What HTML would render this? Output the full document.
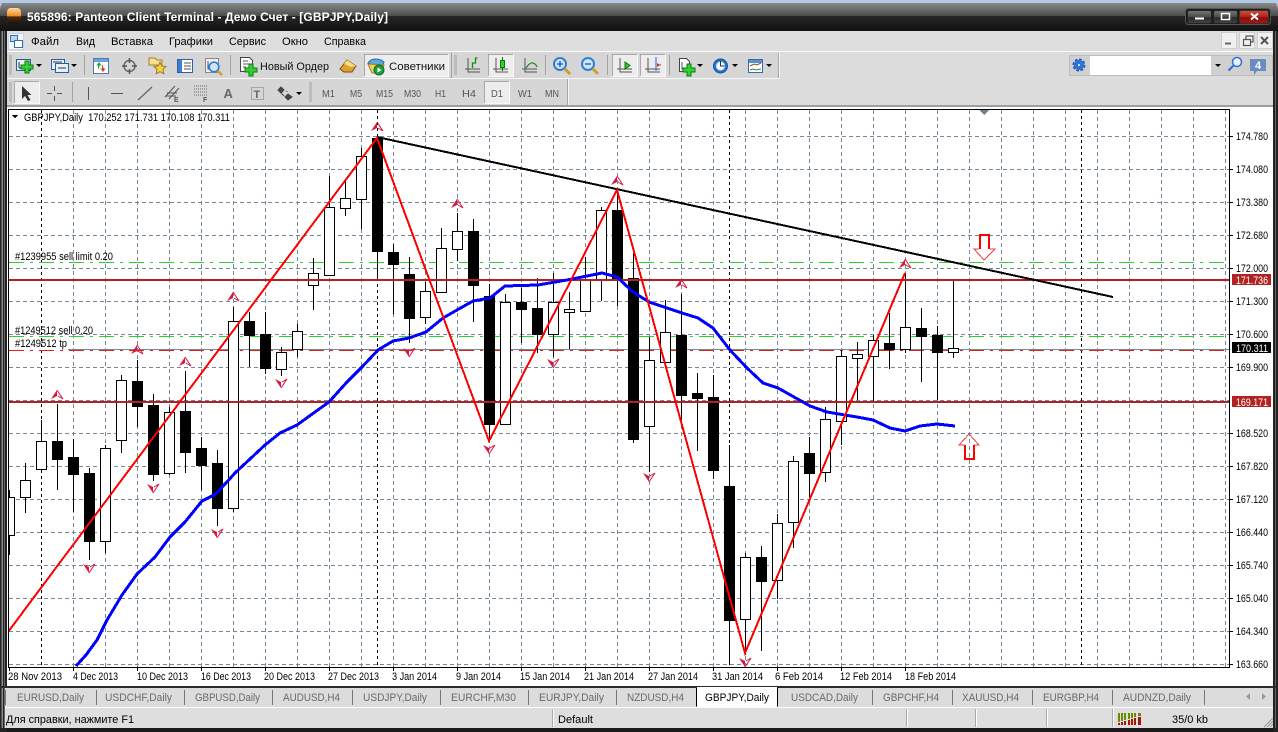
<!DOCTYPE html>
<html><head><meta charset="utf-8"><title>Panteon Client Terminal</title>
<style>
html,body{margin:0;padding:0;background:#000;width:1278px;height:732px;overflow:hidden}
svg{display:block}
text{font-family:"Liberation Sans","Noto Sans CJK SC",sans-serif;font-size:11px;fill:#000;white-space:pre}
.tf text{fill:#555;font-size:10.5px}
.tab text{fill:#6a6a6a}
</style></head><body>
<svg xmlns="http://www.w3.org/2000/svg" width="1278" height="732" viewBox="0 0 1278 732">
<defs>
<linearGradient id="t1" x1="0" y1="0" x2="0" y2="1"><stop offset="0" stop-color="#8a8a8a"/><stop offset="1" stop-color="#4c4c4c"/></linearGradient>
<linearGradient id="t2" x1="0" y1="0" x2="0" y2="1"><stop offset="0" stop-color="#262626"/><stop offset="1" stop-color="#121212"/></linearGradient>
<linearGradient id="logo" x1="0" y1="0" x2="0" y2="1"><stop offset="0" stop-color="#ffd9a0"/><stop offset=".5" stop-color="#f08a20"/><stop offset=".55" stop-color="#4a2a10"/><stop offset="1" stop-color="#201008"/></linearGradient>
<linearGradient id="wb" x1="0" y1="0" x2="0" y2="1"><stop offset="0" stop-color="#777"/><stop offset=".5" stop-color="#4a4a4a"/><stop offset=".55" stop-color="#2a2a2a"/><stop offset="1" stop-color="#444"/></linearGradient>
<linearGradient id="wr" x1="0" y1="0" x2="0" y2="1"><stop offset="0" stop-color="#d05040"/><stop offset=".5" stop-color="#b02018"/><stop offset=".55" stop-color="#8a0c08"/><stop offset="1" stop-color="#a81810"/></linearGradient>
<radialGradient id="clk"><stop offset="0" stop-color="#fff"/><stop offset=".55" stop-color="#e8f2ff"/><stop offset=".6" stop-color="#3a8ae0"/><stop offset="1" stop-color="#0b4aa0"/></radialGradient>
<clipPath id="ch"><rect x="9" y="110" width="1220" height="557"/></clipPath>
<path id="plus" d="M-2-6h4v4h4v4h-4v4h-4v-4h-4v-4h4z" fill="#35d035" stroke="#0b7a0b" stroke-width="1"/>
<g id="up"><path d="M-6 4L0-5 0 1z" fill="#dc143c"/><path d="M0-5L6 4 1 1" fill="none" stroke="#dc143c"/></g>
<g id="lens"><circle cx="0" cy="0" r="6" fill="#cfe4fa" stroke="#2f7fd0" stroke-width="2"/><path d="M4.5 4.5L10 10" stroke="#c8a030" stroke-width="3"/></g>
<polygon id="dd" points="0,0 6,0 3,3" fill="#000"/>
</defs>

<!-- window -->
<rect width="1278" height="732" fill="#1a1a1a"/>
<rect width="1278" height="3" fill="#b3cbe9"/>
<rect x="0" y="3" width="1278" height="13" fill="url(#t1)"/>
<rect x="0" y="16" width="1278" height="15" fill="url(#t2)"/>
<path d="M0 0H6Q1 2 0 9zM1278 0H1272Q1277 2 1278 9z" fill="#b3cbe9"/>
<rect x="7" y="8" width="14" height="16" rx="4" fill="url(#logo)"/>
<text x="27" y="21" style="fill:#fff;font-weight:bold;font-size:12px" textLength="361" lengthAdjust="spacing">565896: Panteon Client Terminal - Демо Счет - [GBPJPY,Daily]</text>
<rect x="1185.500" y="8.500" width="85" height="16" rx="3" fill="#1c1c1c" stroke="#555"/>
<rect x="1187.500" y="10.500" width="24" height="13" rx="2" fill="url(#wb)" stroke="#222"/>
<rect x="1213.500" y="10.500" width="24" height="13" rx="2" fill="url(#wb)" stroke="#222"/>
<rect x="1239.500" y="10.500" width="29" height="13" rx="2" fill="url(#wr)" stroke="#333"/>
<path d="M1195 18.500h9" stroke="#fff" stroke-width="2"/><rect x="1221.500" y="13.500" width="8" height="6" fill="none" stroke="#fff" stroke-width="1.500"/>
<path d="M1251 13.500l7 6m0-6l-7 6" stroke="#fff" stroke-width="2"/>

<!-- frame edges -->
<rect x="0" y="31" width="7" height="701" fill="#222"/>
<rect x="1" y="31" width="1" height="697" fill="#555"/><rect x="2" y="31" width="1" height="697" fill="#8a8a8a"/><rect x="4" y="31" width="1" height="697" fill="#6a6a6a"/>
<rect x="7" y="31" width="1" height="676" fill="#f2f2f2"/>
<rect x="1273" y="31" width="5" height="701" fill="#222"/><rect x="1275" y="31" width="1" height="697" fill="#666"/>

<!-- menu -->
<rect x="7" y="31" width="1266" height="20" fill="#dedede"/>
<rect x="7" y="51" width="1266" height="1" fill="#fafafa"/>
<rect x="8.500" y="33.500" width="15" height="16" fill="#f4f8fe" stroke="#c4d2e8"/>
<rect x="10.500" y="35.500" width="7" height="6" fill="#bcd6f4" stroke="#3a6ab0"/><rect x="14.500" y="40.500" width="8" height="7" fill="#fff" stroke="#3a6ab0"/>
<g>
<text x="31" y="45" textLength="28" lengthAdjust="spacingAndGlyphs">Файл</text><text x="76" y="45" textLength="19" lengthAdjust="spacingAndGlyphs">Вид</text><text x="111" y="45" textLength="42" lengthAdjust="spacingAndGlyphs">Вставка</text><text x="169" y="45" textLength="44" lengthAdjust="spacingAndGlyphs">Графики</text><text x="229" y="45" textLength="37" lengthAdjust="spacingAndGlyphs">Сервис</text><text x="282" y="45" textLength="26" lengthAdjust="spacingAndGlyphs">Окно</text><text x="324" y="45" textLength="42" lengthAdjust="spacingAndGlyphs">Справка</text>
</g>
<g fill="#f0f0f0" stroke="#cfcfcf"><rect x="1221.500" y="32.500" width="15" height="16"/><rect x="1239.500" y="32.500" width="15" height="16"/><rect x="1257.500" y="32.500" width="15" height="16"/></g>
<path d="M1225 43.500h6" stroke="#666" stroke-width="2"/>
<path d="M1243.500 39.500h7v6h-7zM1246 39v-3h7v6h-2" fill="none" stroke="#555" stroke-width="1.200"/>
<path d="M1261 37l7 7m0-7l-7 7" stroke="#555" stroke-width="2"/>

<!-- toolbars -->
<rect x="7" y="52" width="1266" height="53" fill="#dcdcdc"/>
<rect x="7" y="52" width="772" height="27" fill="#d6d6d6"/>
<rect x="7" y="79" width="561" height="26" fill="#d6d6d6"/>
<rect x="7" y="78" width="772" height="1" fill="#f6f6f6"/><rect x="779" y="52" width="1" height="27" fill="#f6f6f6"/><rect x="778" y="53" width="1" height="25" fill="#a8a8a8"/>
<rect x="567" y="79" width="1" height="26" fill="#a8a8a8"/><rect x="568" y="79" width="1" height="26" fill="#f6f6f6"/>
<rect x="7" y="105" width="1266" height="2" fill="#9e9e9e"/>
<path d="M9 56h3M9 58h3M9 60h3M9 62h3M9 64h3M9 66h3M9 68h3M9 70h3M9 72h3M9 74h3M9 83h3M9 85h3M9 87h3M9 89h3M9 91h3M9 93h3M9 95h3M9 97h3M9 99h3M9 101h3M454 56h3M454 58h3M454 60h3M454 62h3M454 64h3M454 66h3M454 68h3M454 70h3M454 72h3M454 74h3M309 83h3M309 85h3M309 87h3M309 89h3M309 91h3M309 93h3M309 95h3M309 97h3M309 99h3M309 101h3" stroke="#a4a4a4" stroke-width="1"/>
<path d="M84.500 55v20M230.500 55v20M451.500 53v25M545.500 55v20M607.500 55v20M669.500 55v20M72.500 82v20" stroke="#a2a2a2"/>
<g fill="#ededed" stroke="#f8f8f8"><rect x="364.500" y="54.500" width="84" height="22"/><rect x="488.500" y="54.500" width="25" height="22"/><rect x="612.500" y="54.500" width="25" height="22"/><rect x="640.500" y="54.500" width="25" height="22"/><rect x="14.500" y="81.500" width="25" height="22"/><rect x="484.500" y="81.500" width="25" height="22"/></g>
<path d="M364.500 76V54.500H448M488.500 76V54.500H513M612.500 76V54.500H637M640.500 76V54.500H665M14.500 103V81.500H39M484.500 103V81.500H509" fill="none" stroke="#a8a8a8"/>

<!-- row1 icons -->
<rect x="16.500" y="59.500" width="14" height="11" fill="#e6f0fb" stroke="#2b5d9e"/><path d="M19 62v6M19 68h6M22 65h5" stroke="#333" fill="none"/><use href="#plus" transform="translate(27 67)"/><use href="#dd" transform="translate(36 64)"/>
<rect x="51.500" y="59.500" width="13" height="10" fill="#e6f0fb" stroke="#2b5d9e"/><rect x="55.500" y="63.500" width="13" height="9" fill="#e6f0fb" stroke="#2b5d9e"/><path d="M53 62h9M58 68h8" stroke="#333"/><use href="#dd" transform="translate(71 64)"/>
<rect x="93.500" y="58.500" width="15" height="15" fill="#fff" stroke="#4a7ab8"/><rect x="94" y="59" width="14" height="3" fill="#6fa0dc"/><path d="M98 70v-5l-2 1 3-4 3 4-2-1z" fill="#20a040"/><path d="M102 64v5l-2-1 3 4 3-4-2 1z" fill="#d84020"/>
<circle cx="129.500" cy="66" r="5.500" fill="none" stroke="#666" stroke-width="1.500"/><path d="M129.500 58v5M129.500 69v5M122 66h5M132 66h5" stroke="#555" stroke-width="1.500"/>
<path d="M149 58h6l2 2h5v5h-13z" fill="#f8e090" stroke="#a08030"/><path d="M160 62l1.800 4 4.200.500-3 3 .800 4.200-3.800-2-3.800 2 .800-4.200-3-3 4.200-.500z" fill="#f6d040" stroke="#a08020"/>
<rect x="177.500" y="59.500" width="15" height="13" fill="#fff" stroke="#3060a0"/><rect x="178" y="60" width="4" height="12" fill="#3a80d0"/><path d="M184 63h7M184 66h7M184 69h7" stroke="#555"/>
<rect x="205.500" y="58.500" width="13" height="14" fill="#f0f0f0" stroke="#888"/><path d="M208 61v8h7" stroke="#555" fill="none"/><use href="#lens" transform="translate(214 67) scale(.8)"/>
<path d="M240.500 57.500h9l3 3v11h-12z" fill="#fff" stroke="#444"/><path d="M243 61h5M243 64h6M243 67h3" stroke="#555"/><use href="#plus" transform="translate(251 70)"/>
<text x="260" y="70" textLength="69" lengthAdjust="spacingAndGlyphs" style="fill:#111">Новый Ордер</text>
<path d="M340 69l7-9 9 6-4 6h-8z" fill="#e0a030" stroke="#7a5010"/><path d="M347 60l9 6-5 1-7-3z" fill="#f8dc80"/>
<path d="M368 63q4-6 13-3l3 2-1 3-8 1z" fill="#5fa8dc" stroke="#2a6aa0"/><path d="M368 64l4 9h9l3-8z" fill="#f4d060" stroke="#a08030"/><circle cx="379" cy="70" r="5" fill="#20a040" stroke="#0b6a20"/><path d="M377.500 67.500l4 2.500-4 2.500z" fill="#fff"/>
<text x="389" y="70" textLength="56" lengthAdjust="spacingAndGlyphs" style="fill:#111">Советники</text>

<path d="M468 58v14h12M465 69h15" stroke="#555" fill="none"/><path d="M472.500 68v-5h3v-5h2" stroke="#109010" fill="none" stroke-width="1.300"/>
<path d="M496 58v14h12M493 69h15" stroke="#555" fill="none"/><rect x="500.500" y="60.500" width="4" height="7" fill="#30d030" stroke="#0a7a0a"/><path d="M502.500 57v3M502.500 68v3" stroke="#0a7a0a"/>
<path d="M525 58v14h12M522 69h15" stroke="#555" fill="none"/><path d="M526 68q4-6 7-5t4 4" stroke="#2a8a2a" fill="none" stroke-width="1.300"/>
<use href="#lens" transform="translate(560 64)"/><path d="M557 64h6M560 61v6" stroke="#2a6ac0" stroke-width="1.500"/>
<use href="#lens" transform="translate(588 64)"/><path d="M585 64h6" stroke="#2a6ac0" stroke-width="1.500"/>
<path d="M620 58v14h12M617 69h15" stroke="#555" fill="none"/><path d="M625 62l5 3.500-5 3.500z" fill="#40c040" stroke="#0a7a0a"/>
<path d="M648 58v14h12M645 69h15" stroke="#555" fill="none"/><path d="M656 57v14" stroke="#1a6ad0"/><path d="M660 65l-3-2v4z" fill="#d03010"/><path d="M657 65h4" stroke="#d03010"/>
<path d="M679.500 58.500h7l3 3v10h-10z" fill="#fff" stroke="#444"/><path d="M682 62v7h5" stroke="#555" fill="none"/><use href="#plus" transform="translate(689 70)"/><use href="#dd" transform="translate(697 64)"/>
<circle cx="720.500" cy="66" r="7.500" fill="url(#clk)"/><path d="M720.500 61v5h4" stroke="#333" fill="none"/><use href="#dd" transform="translate(732 64)"/>
<rect x="748.500" y="59.500" width="14" height="13" fill="#fff" stroke="#3a6aa8"/><rect x="749" y="60" width="13" height="3" fill="#5a90d0"/><path d="M750 66l4-2 3 1 4-2" stroke="#a04030" fill="none"/><path d="M750 70l3-1 3 1 5-1" stroke="#309030" fill="none"/><use href="#dd" transform="translate(766 64)"/>

<!-- search area -->
<rect x="1069.500" y="55.500" width="203" height="20" fill="#d0d0d0" stroke="#bdbdbd"/>
<rect x="1090" y="56" width="121" height="19" fill="#fff"/>
<circle cx="1079" cy="65" r="5" fill="#2f72d8" stroke="#2458b0" stroke-width="3" stroke-dasharray="2.500 1.400"/><circle cx="1079" cy="65" r="5" fill="#2f72d8"/><circle cx="1079" cy="65" r="1" fill="#fff"/>
<use href="#dd" transform="translate(1215 64)"/>
<circle cx="1237" cy="62" r="4.500" fill="#e8f0fc" stroke="#3070d8" stroke-width="1.500"/><path d="M1233.500 65.500l-5 5" stroke="#3070d8" stroke-width="2"/>
<path d="M1250 59h16v12h-9l-3 4v-4h-4z" fill="#6a8cc0"/><text x="1255" y="69" style="fill:#fff;font-weight:bold;font-size:11px">4</text>

<!-- row2 icons -->
<path d="M22 86v13l3-3 3 5 2.500-1-3-5h4z" fill="#333"/>
<path d="M54.500 86v5M54.500 96v5M47 93.500h5M57 93.500h5" stroke="#555"/>
<path d="M88.500 87v13" stroke="#555"/><path d="M111 93.500h12" stroke="#555"/><path d="M138 100l14-13" stroke="#666" stroke-width="1.300"/>
<path d="M165 97l10-11M169 99l10-11M167 93h10M166 96h10" stroke="#555" fill="none"/><text x="174" y="102" style="font-size:7px;font-weight:bold;fill:#555">E</text>
<path d="M194 86h14M194 89h14M194 92h14M194 95h14" stroke="#666" stroke-dasharray="1 1"/><text x="203" y="102" style="font-size:7px;font-weight:bold;fill:#555">F</text>
<text x="223.500" y="98" style="font-size:13px;font-weight:bold;fill:#666">A</text>
<rect x="251.500" y="87.500" width="12" height="12" fill="none" stroke="#777" stroke-dasharray="1 1"/><text x="253.500" y="98" style="font-size:11px;font-weight:bold;fill:#666">T</text>
<path d="M278 90l3-3 3 3-3 3zM285 97l3-3 4 3-4 3zM281 93l3 3M287 92v-1" fill="#444" stroke="#444"/><use href="#dd" transform="translate(296 92)"/>
<g class="tf">
<text x="322" y="97" textLength="13" lengthAdjust="spacingAndGlyphs">M1</text><text x="350" y="97" textLength="12" lengthAdjust="spacingAndGlyphs">M5</text><text x="376" y="97" textLength="17" lengthAdjust="spacingAndGlyphs">M15</text><text x="404" y="97" textLength="17" lengthAdjust="spacingAndGlyphs">M30</text><text x="435" y="97" textLength="11" lengthAdjust="spacingAndGlyphs">H1</text><text x="462" y="97" textLength="14" lengthAdjust="spacingAndGlyphs">H4</text><text x="491" y="97" textLength="12" lengthAdjust="spacingAndGlyphs">D1</text><text x="518" y="97" textLength="14" lengthAdjust="spacingAndGlyphs">W1</text><text x="545" y="97" textLength="14" lengthAdjust="spacingAndGlyphs">MN</text>
</g>

<!-- chart area -->
<rect x="7" y="107" width="1266" height="580" fill="#fff"/>
<g clip-path="url(#ch)" shape-rendering="crispEdges">
<path fill="none" stroke="#778899" stroke-dasharray="4 3" d="M73.500 110V667M105.500 110V667M137.500 110V667M169.500 110V667M201.500 110V667M233.500 110V667M265.500 110V667M297.500 110V667M329.500 110V667M361.500 110V667M393.500 110V667M425.500 110V667M457.500 110V667M489.500 110V667M521.500 110V667M553.500 110V667M585.500 110V667M617.500 110V667M649.500 110V667M681.500 110V667M713.500 110V667M745.500 110V667M777.500 110V667M809.500 110V667M841.500 110V667M873.500 110V667M905.500 110V667M937.500 110V667M969.500 110V667M1001.500 110V667M1033.500 110V667M1065.500 110V667M1097.500 110V667M1129.500 110V667M1161.500 110V667M1193.500 110V667M1225.500 110V667M9 136.500H1229M9 169.500H1229M9 202.500H1229M9 235.500H1229M9 268.500H1229M9 301.500H1229M9 334.500H1229M9 367.500H1229M9 400.500H1229M9 433.500H1229M9 466.500H1229M9 499.500H1229M9 532.500H1229M9 565.500H1229M9 598.500H1229M9 631.500H1229M9 664.500H1229"/>
<path fill="none" stroke="#000" stroke-dasharray="3 3" d="M41.500 110V667M377.500 110V667M729.500 110V667M1081.500 110V667"/>
<!-- green/order lines -->
<path fill="none" stroke="#2fd02f" stroke-dasharray="15 6 3 6" d="M9 262.500H1229M9 336.500H1229"/>
<path fill="none" stroke="#778899" d="M68 349.500H1229"/>
<path fill="none" stroke="#e02020" stroke-dasharray="15 6 3 6" d="M9 350.500H1229"/>
<!-- wicks -->
<path fill="none" stroke="#000" d="M9.500 490V555M25.500 463V513M41.500 420V469M57.500 404V490M73.500 439V512M89.500 468V560M105.500 445V553M121.500 375V453M137.500 360V427M153.500 394V481M169.500 407V475M185.500 371V473M201.500 437V490M217.500 450V526M233.500 307V512M249.500 312V367M265.500 312V374M281.500 347V376M297.500 324V357M313.500 258V310M329.500 176V275M345.500 180V216M361.500 148V229M377.500 138V278M393.500 244V314M409.500 257V343M425.500 282V324M441.500 228V292M457.500 213V261M473.500 219V322M489.500 284V440M505.500 294V424M521.500 288V343M537.500 278V353M553.500 273V357M569.500 292V349M585.500 257V311M601.500 207V301M617.500 190V306M633.500 253V443M649.500 337V472M665.500 300V362M681.500 294V420M697.500 373V451M713.500 375V479M729.500 445V664M745.500 553V655M761.500 546V651M777.500 514V599M793.500 456V548M809.500 437V497M825.500 407V482M841.500 350V445M857.500 342V400M873.500 335V402M889.500 313V369M905.500 273V353M921.500 308V382M937.500 326V400M953.500 281V358"/>
<!-- white bodies -->
<path fill="#fff" stroke="#000" d="M4.500 497.500h10v38h-10zM20.500 480.500h10v17h-10zM36.500 441.500h10v28h-10zM100.500 448.500h10v93h-10zM116.500 380.500h10v60h-10zM164.500 412.500h10v61h-10zM228.500 321.500h10v187h-10zM276.500 352.500h10v17h-10zM292.500 331.500h10v18h-10zM308.500 273.500h10v12h-10zM324.500 207.500h10v68h-10zM340.500 198.500h10v10h-10zM356.500 156.500h10v43h-10zM420.500 291.500h10v26h-10zM436.500 248.500h10v44h-10zM452.500 231.500h10v18h-10zM500.500 302.500h10v122h-10zM548.500 302.500h10v32h-10zM564.500 309.500h10v3h-10zM580.500 280.500h10v31h-10zM596.500 210.500h10v69h-10zM644.500 360.500h10v66h-10zM660.500 332.500h10v30h-10zM740.500 557.500h10v62h-10zM772.500 523.500h10v57h-10zM788.500 461.500h10v61h-10zM820.500 419.500h10v53h-10zM836.500 356.500h10v65h-10zM852.500 354.500h10v4h-10zM868.500 340.500h10v16h-10zM900.500 327.500h10v22h-10zM948.500 348.500h10v4h-10z"/>
<!-- black bodies -->
<path fill="#000" stroke="#000" d="M52.500 441.500h10v18h-10zM68.500 457.500h10v17h-10zM84.500 473.500h10v68h-10zM132.500 381.500h10v25h-10zM148.500 405.500h10v69h-10zM180.500 411.500h10v41h-10zM196.500 448.500h10v17h-10zM212.500 463.500h10v45h-10zM244.500 321.500h10v14h-10zM260.500 334.500h10v34h-10zM372.500 138.500h10v113h-10zM388.500 252.500h10v12h-10zM404.500 274.500h10v44h-10zM468.500 231.500h10v54h-10zM484.500 296.500h10v128h-10zM516.500 302.500h10v7h-10zM532.500 308.500h10v26h-10zM612.500 210.500h10v68h-10zM628.500 278.500h10v161h-10zM676.500 335.500h10v60h-10zM692.500 393.500h10v5h-10zM708.500 397.500h10v73h-10zM724.500 486.500h10v134h-10zM756.500 557.500h10v24h-10zM804.500 453.500h10v20h-10zM884.500 343.500h10v6h-10zM916.500 328.500h10v8h-10zM932.500 335.500h10v17h-10z"/>
<!-- levels -->
<rect x="9" y="279" width="1220" height="2" fill="#b22222"/>
<rect x="9" y="401" width="1220" height="2" fill="#b22222"/>
<!-- blue MA -->
<polyline fill="none" stroke="#0000ff" stroke-width="3" points="76,666 86,655 97,640 107,620 122,595 137,574 155,557 170,537 185,522 202,501 216,494 235,473 265,445 280,433 297,425 315,412 329,402 347,382 362,367 378,350 393,341 409,338 426,332 443,318 457,310 473,301 490,298 505,286 538,285 567,280 602,273 617,277 633,292 649,302 682,313 698,318 713,328 730,350 747,368 763,383 778,388 810,406 827,412 857,417 873,420 890,428 905,431 920,426 937,424 955,426"/>
<!-- trend -->
<path d="M377 137L1113 297" stroke="#000" stroke-width="2" fill="none"/>
<!-- zigzag -->
<polyline fill="none" stroke="#ff0000" stroke-width="2" points="8,632 377,138 489,441 617,190 745,653 905,273"/>
<!-- fractals -->
<g shape-rendering="auto">
<use href="#up" x="57" y="395"/><use href="#up" x="137" y="350"/><use href="#up" x="185" y="362"/><use href="#up" x="233" y="297"/><use href="#up" x="377" y="127"/><use href="#up" x="457" y="204"/><use href="#up" x="617" y="181"/><use href="#up" x="681" y="284"/><use href="#up" x="905" y="264"/>
<use href="#up" transform="translate(89 568) scale(1 -1)"/><use href="#up" transform="translate(153 488) scale(1 -1)"/><use href="#up" transform="translate(217 533) scale(1 -1)"/><use href="#up" transform="translate(281 383) scale(1 -1)"/><use href="#up" transform="translate(409 352) scale(1 -1)"/><use href="#up" transform="translate(489 449) scale(1 -1)"/><use href="#up" transform="translate(553 363) scale(1 -1)"/><use href="#up" transform="translate(649 477) scale(1 -1)"/><use href="#up" transform="translate(745 662) scale(1 -1)"/>
</g>
<!-- big arrows -->
<path d="M980 249v-14h9v14" fill="none" stroke="#f00" stroke-width="2"/><path d="M979 249h-5l10 11 11-11h-5" fill="none" stroke="#f04040"/>
<path d="M965 445v14h9v-14" fill="none" stroke="#f00" stroke-width="2"/><path d="M965 445h-6l10-11 10 11h-5" fill="none" stroke="#f04040"/>
<polygon points="979,110 989,110 984,115" fill="#6f8090"/>
<!-- labels -->
<polygon points="12,115 18,115 15,118.500" fill="#000"/>
<text x="24" y="121" textLength="206" lengthAdjust="spacingAndGlyphs">GBPJPY,Daily  170.252 171.731 170.108 170.311</text>
<text x="15" y="260" textLength="98" lengthAdjust="spacingAndGlyphs">#1239955 sell limit 0.20</text>
<text x="15" y="334" textLength="78" lengthAdjust="spacingAndGlyphs">#1249512 sell 0.20</text>
<text x="15" y="347" textLength="52" lengthAdjust="spacingAndGlyphs">#1249512 tp</text>
</g>
<rect x="8.500" y="109.500" width="1221" height="558" fill="none" stroke="#000"/>

<!-- price axis -->
<path stroke="#000" d="M1229 136.500h4M1229 169.500h4M1229 202.500h4M1229 235.500h4M1229 268.500h4M1229 301.500h4M1229 334.500h4M1229 367.500h4M1229 433.500h4M1229 466.500h4M1229 499.500h4M1229 532.500h4M1229 565.500h4M1229 598.500h4M1229 631.500h4M1229 664.500h4M73.500 667v4M137.500 667v4M201.500 667v4M265.500 667v4M329.500 667v4M393.500 667v4M457.500 667v4M521.500 667v4M585.500 667v4M649.500 667v4M713.500 667v4M777.500 667v4M841.500 667v4M905.500 667v4M9.500 667v4"/>
<g>
<text x="1236" y="140" textLength="32" lengthAdjust="spacingAndGlyphs">174.780</text><text x="1236" y="173" textLength="32" lengthAdjust="spacingAndGlyphs">174.080</text><text x="1236" y="206" textLength="32" lengthAdjust="spacingAndGlyphs">173.380</text><text x="1236" y="239" textLength="32" lengthAdjust="spacingAndGlyphs">172.680</text><text x="1236" y="272" textLength="32" lengthAdjust="spacingAndGlyphs">172.000</text><text x="1236" y="305" textLength="32" lengthAdjust="spacingAndGlyphs">171.300</text><text x="1236" y="338" textLength="32" lengthAdjust="spacingAndGlyphs">170.600</text><text x="1236" y="371" textLength="32" lengthAdjust="spacingAndGlyphs">169.900</text><text x="1236" y="437" textLength="32" lengthAdjust="spacingAndGlyphs">168.520</text><text x="1236" y="470" textLength="32" lengthAdjust="spacingAndGlyphs">167.820</text><text x="1236" y="503" textLength="32" lengthAdjust="spacingAndGlyphs">167.120</text><text x="1236" y="536" textLength="32" lengthAdjust="spacingAndGlyphs">166.440</text><text x="1236" y="569" textLength="32" lengthAdjust="spacingAndGlyphs">165.740</text><text x="1236" y="602" textLength="32" lengthAdjust="spacingAndGlyphs">165.040</text><text x="1236" y="635" textLength="32" lengthAdjust="spacingAndGlyphs">164.340</text><text x="1236" y="668" textLength="32" lengthAdjust="spacingAndGlyphs">163.660</text>
</g>
<rect x="1232" y="274" width="39" height="11" fill="#b22222"/><text x="1236" y="284" textLength="32" lengthAdjust="spacingAndGlyphs" style="fill:#fff">171.736</text>
<rect x="1232" y="342" width="39" height="11" fill="#000"/><text x="1236" y="352" textLength="32" lengthAdjust="spacingAndGlyphs" style="fill:#fff">170.311</text>
<rect x="1232" y="396" width="39" height="11" fill="#b22222"/><text x="1236" y="406" textLength="32" lengthAdjust="spacingAndGlyphs" style="fill:#fff">169.171</text>

<!-- time axis -->
<g>
<text x="8" y="680" textLength="54" lengthAdjust="spacingAndGlyphs">28 Nov 2013</text><text x="73" y="680" textLength="45" lengthAdjust="spacingAndGlyphs">4 Dec 2013</text><text x="137" y="680" textLength="51" lengthAdjust="spacingAndGlyphs">10 Dec 2013</text><text x="201" y="680" textLength="50" lengthAdjust="spacingAndGlyphs">16 Dec 2013</text><text x="264" y="680" textLength="51" lengthAdjust="spacingAndGlyphs">20 Dec 2013</text><text x="328" y="680" textLength="51" lengthAdjust="spacingAndGlyphs">27 Dec 2013</text><text x="392" y="680" textLength="45" lengthAdjust="spacingAndGlyphs">3 Jan 2014</text><text x="456" y="680" textLength="45" lengthAdjust="spacingAndGlyphs">9 Jan 2014</text><text x="520" y="680" textLength="50" lengthAdjust="spacingAndGlyphs">15 Jan 2014</text><text x="584" y="680" textLength="50" lengthAdjust="spacingAndGlyphs">21 Jan 2014</text><text x="648" y="680" textLength="50" lengthAdjust="spacingAndGlyphs">27 Jan 2014</text><text x="712" y="680" textLength="51" lengthAdjust="spacingAndGlyphs">31 Jan 2014</text><text x="775" y="680" textLength="48" lengthAdjust="spacingAndGlyphs">6 Feb 2014</text><text x="840" y="680" textLength="52" lengthAdjust="spacingAndGlyphs">12 Feb 2014</text><text x="905" y="680" textLength="51" lengthAdjust="spacingAndGlyphs">18 Feb 2014</text>
</g>

<!-- tabs -->
<rect x="0" y="686" width="1278" height="2" fill="#2a2a2a"/>
<rect x="5" y="688" width="1268" height="19" fill="#dcdcdc"/>
<rect x="5" y="707" width="1268" height="1" fill="#fff"/>
<path stroke="#7a7a6a" d="M5.500 690v15M96.500 690v15M184.500 690v15M272.500 690v15M352.500 690v15M440.500 690v15M528.500 690v15M616.500 690v15M872.500 690v15M952.500 690v15M1032.500 690v15M1112.500 690v15M1204.500 690v15"/>
<rect x="697" y="687" width="80" height="20" fill="#fff"/>
<path stroke="#000" fill="none" d="M696.500 688v18.500M777.500 688v18.500"/>
<g class="tab">
<text x="17" y="701" textLength="67" lengthAdjust="spacingAndGlyphs">EURUSD,Daily</text><text x="105" y="701" textLength="67" lengthAdjust="spacingAndGlyphs">USDCHF,Daily</text><text x="195" y="701" textLength="65" lengthAdjust="spacingAndGlyphs">GBPUSD,Daily</text><text x="283" y="701" textLength="57" lengthAdjust="spacingAndGlyphs">AUDUSD,H4</text><text x="363" y="701" textLength="64" lengthAdjust="spacingAndGlyphs">USDJPY,Daily</text><text x="451" y="701" textLength="65" lengthAdjust="spacingAndGlyphs">EURCHF,M30</text><text x="539" y="701" textLength="65" lengthAdjust="spacingAndGlyphs">EURJPY,Daily</text><text x="627" y="701" textLength="57" lengthAdjust="spacingAndGlyphs">NZDUSD,H4</text><text x="791" y="701" textLength="67" lengthAdjust="spacingAndGlyphs">USDCAD,Daily</text><text x="883" y="701" textLength="56" lengthAdjust="spacingAndGlyphs">GBPCHF,H4</text><text x="962" y="701" textLength="57" lengthAdjust="spacingAndGlyphs">XAUUSD,H4</text><text x="1043" y="701" textLength="56" lengthAdjust="spacingAndGlyphs">EURGBP,H4</text><text x="1123" y="701" textLength="68" lengthAdjust="spacingAndGlyphs">AUDNZD,Daily</text>
</g>
<text x="705" y="701" textLength="64" lengthAdjust="spacingAndGlyphs" style="fill:#000">GBPJPY,Daily</text>
<polygon points="1250,693 1250,700 1246,696.500" fill="#999"/><polygon points="1262,693 1262,700 1266,696.500" fill="#999"/>

<!-- status -->
<rect x="5" y="708" width="1268" height="20" fill="#dedede"/>
<path stroke="#fff" d="M553.500 709v18M907.500 709v18M976.500 709v18M1047.500 709v18M1113.500 709v18"/><path stroke="#a8a8a8" d="M552.500 709v18M906.500 709v18M975.500 709v18M1046.500 709v18M1112.500 709v18"/>
<text x="6" y="723" textLength="128" lengthAdjust="spacingAndGlyphs">Для справки, нажмите F1</text>
<text x="558" y="723" textLength="35" lengthAdjust="spacingAndGlyphs">Default</text>
<g>
<path fill="#6b8a00" d="M1118 713h2v9h-2zM1121 713h2v8h-2zM1124 713h2v7h-2zM1128 713h2v6h-2zM1131 713h2v5h-2zM1134 713h2v4h-2zM1138 713h3v3h-3z"/>
<path fill="#a01808" d="M1118 723h2v2h-2zM1121 722h2v3h-2zM1124 721h2v4h-2zM1128 720h2v5h-2zM1131 719h2v6h-2zM1134 718h2v7h-2zM1138 717h3v8h-3z"/>
</g>
<text x="1172" y="723" textLength="36" lengthAdjust="spacingAndGlyphs">35/0 kb</text>
<path d="M1264 727l9-9M1267 727l6-6M1270 727l3-3" stroke="#9a9a9a" fill="none"/>
</svg>
</body></html>
